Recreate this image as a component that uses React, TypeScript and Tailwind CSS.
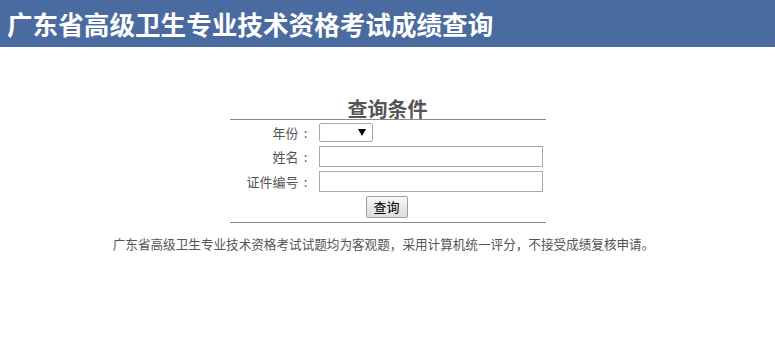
import React from "react";

const font = { fontFamily: '"Noto Sans CJK SC", "Liberation Sans", sans-serif' };

function Label({ text }: { text: string }) {
  return (
    <label className="w-[83px] flex justify-end items-center text-[13px] text-[#555] leading-none">
      <span>{text}</span>
      <span className="w-[14px] text-center">:</span>
    </label>
  );
}

export default function App() {
  return (
    <div className="w-[775px] h-[340px] bg-white" style={font}>
      <div className="h-[47px] bg-[#4a6ba0] flex items-center pl-[7px]">
        <h1 className="text-white font-bold text-[25.6px] leading-none">
          广东省高级卫生专业技术资格考试成绩查询
        </h1>
      </div>
      <div className="w-[316px] mx-auto mt-[49px]">
        <div className="h-[24px] border-b border-[#8a8a8a] flex items-end justify-center">
          <span className="text-[20px] font-bold text-[#555] leading-[24px] -mb-[2px]">查询条件</span>
        </div>
        <div className="flex flex-col pb-[3px] border-b border-[#8a8a8a]">
          <div className="flex items-center h-[24px]">
            <Label text="年份" />
            <div className="ml-[6px] w-[54px] h-[19px] border border-[#a9a9a9] rounded-[2px] bg-white flex items-center justify-end pr-[6px]">
              <svg width="8" height="7" viewBox="0 0 8 7">
                <path d="M0 0 H8 L4 7 Z" fill="#000" />
              </svg>
            </div>
          </div>
          <div className="flex items-center h-[25px]">
            <Label text="姓名" />
            <input className="ml-[6px] w-[224px] h-[21px] border border-[#a9a9a9] bg-white outline-none" />
          </div>
          <div className="flex items-center h-[25px]">
            <Label text="证件编号" />
            <input className="ml-[6px] w-[224px] h-[21px] border border-[#a9a9a9] bg-white outline-none" />
          </div>
          <div className="flex items-center justify-center h-[25px]">
            <button className="ml-[-2px] w-[42px] h-[22px] border border-[#a0a0a0] rounded-[2px] bg-gradient-to-b from-[#f8f8f8] to-[#dcdcdc] text-[13px] text-black leading-none">
              查询
            </button>
          </div>
        </div>
      </div>
      <p className="mt-[13px] pr-[8px] text-center text-[12.6px] text-[#555] leading-[16px]">
        广东省高级卫生专业技术资格考试试题均为客观题，采用计算机统一评分，不接受成绩复核申请。
      </p>
    </div>
  );
}
